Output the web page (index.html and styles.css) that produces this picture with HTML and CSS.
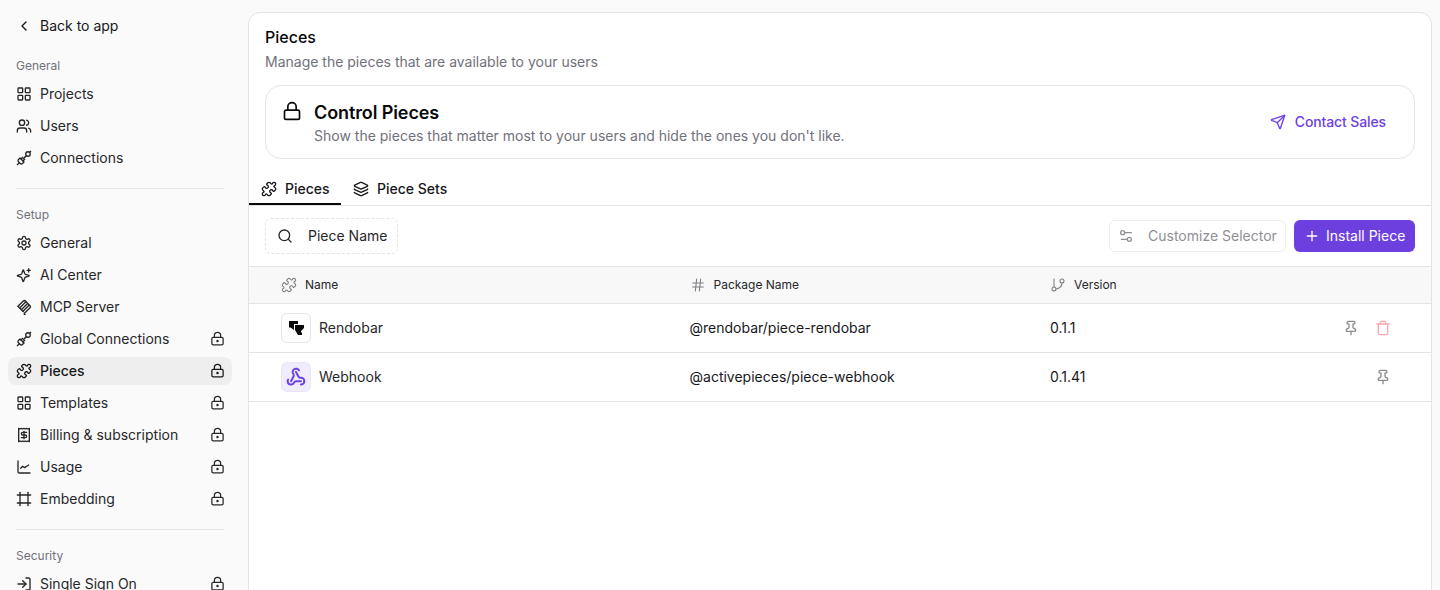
FILE: index.html
```html
<!DOCTYPE html>
<html lang="en">
<head>
<meta charset="utf-8">
<title>Pieces</title>
<link rel="stylesheet" href="styles.css">
</head>
<body>
<svg class="defs" aria-hidden="true">
  <symbol id="chev" viewBox="0 0 24 24"><path d="m15 18-6-6 6-6"/></symbol>
  <symbol id="grid" viewBox="0 0 24 24"><rect x="3" y="3" width="7" height="7" rx="1"/><rect x="14" y="3" width="7" height="7" rx="1"/><rect x="14" y="14" width="7" height="7" rx="1"/><rect x="3" y="14" width="7" height="7" rx="1"/></symbol>
  <symbol id="users" viewBox="0 0 24 24"><path d="M16 21v-2a4 4 0 0 0-4-4H6a4 4 0 0 0-4 4v2"/><circle cx="9" cy="7" r="4"/><path d="M22 21v-2a4 4 0 0 0-3-3.87"/><path d="M16 3.13a4 4 0 0 1 0 7.75"/></symbol>
  <symbol id="plug" viewBox="0 0 24 24"><path d="m2 22 3-3"/><path d="M6.3 20.3a2.4 2.4 0 0 0 3.4 0L12 18l-6-6-2.3 2.3a2.4 2.4 0 0 0 0 3.4Z"/><path d="M7.500 13.500 10 11"/><path d="M10.500 16.500 13 14"/><path d="m11 13 3-3"/><circle cx="18" cy="6" r="3.400"/><path d="m15.500 8.500-1.500 1.500"/><path d="m20.500 3.500 1.500-1.500"/></symbol>
  <symbol id="puzzle" viewBox="0 0 24 24"><path d="M19.439 7.85c-.049.322.059.648.289.878l1.568 1.568c.47.47.706 1.087.706 1.704s-.235 1.233-.706 1.704l-1.611 1.611a.98.98 0 0 1-.837.276c-.47-.07-.802-.48-.968-.925a2.501 2.501 0 1 0-3.214 3.214c.446.166.855.497.925.968a.979.979 0 0 1-.276.837l-1.61 1.61a2.404 2.404 0 0 1-1.705.707 2.402 2.402 0 0 1-1.704-.706l-1.568-1.568a1.026 1.026 0 0 0-.877-.29c-.493.074-.84.504-1.02.968a2.5 2.5 0 1 1-3.237-3.237c.464-.18.894-.527.967-1.02a1.026 1.026 0 0 0-.289-.877l-1.568-1.568A2.402 2.402 0 0 1 1.998 12c0-.617.236-1.234.706-1.704L4.23 8.77c.24-.24.581-.353.917-.303.515.077.877.528 1.073 1.01a2.5 2.5 0 1 0 3.259-3.259c-.482-.196-.933-.558-1.01-1.073-.05-.336.062-.676.303-.917l1.525-1.525A2.402 2.402 0 0 1 12 1.998c.617 0 1.234.236 1.704.706l1.568 1.568c.23.23.556.338.877.29.493-.074.84-.504 1.02-.968a2.5 2.5 0 1 1 3.237 3.237c-.464.18-.894.527-.967 1.02Z"/></symbol>
  <symbol id="gear" viewBox="0 0 24 24"><path d="M12.22 2h-.44a2 2 0 0 0-2 2v.18a2 2 0 0 1-1 1.730l-.43.25a2 2 0 0 1-2 0l-.15-.08a2 2 0 0 0-2.730.73l-.22.38a2 2 0 0 0 .73 2.730l.15.1a2 2 0 0 1 1 1.720v.51a2 2 0 0 1-1 1.740l-.15.09a2 2 0 0 0-.73 2.730l.22.38a2 2 0 0 0 2.730.73l.15-.08a2 2 0 0 1 2 0l.43.25a2 2 0 0 1 1 1.730V20a2 2 0 0 0 2 2h.44a2 2 0 0 0 2-2v-.18a2 2 0 0 1 1-1.730l.43-.25a2 2 0 0 1 2 0l.15.08a2 2 0 0 0 2.730-.73l.22-.39a2 2 0 0 0-.73-2.730l-.15-.08a2 2 0 0 1-1-1.740v-.5a2 2 0 0 1 1-1.740l.15-.09a2 2 0 0 0 .73-2.730l-.22-.38a2 2 0 0 0-2.730-.73l-.15.08a2 2 0 0 1-2 0l-.43-.25a2 2 0 0 1-1-1.730V4a2 2 0 0 0-2-2z"/><circle cx="12" cy="12" r="3"/></symbol>
  <symbol id="spark" viewBox="0 0 24 24"><path d="M8.700 16.500A2 2 0 0 0 7.500 15.300l-5.100-1.700a.5.5 0 0 1 0-.95l5.100-1.700a2 2 0 0 0 1.200-1.200l1.700-5.100a.5.5 0 0 1 .95 0l1.700 5.100a2 2 0 0 0 1.200 1.200l5.100 1.700a.5.5 0 0 1 0 .95l-5.100 1.700a2 2 0 0 0-1.200 1.200l-1.700 5.100a.5.5 0 0 1-.95 0z"/><path d="M19 2.500v5"/><path d="M21.500 5h-5"/></symbol>
  <symbol id="mcp" viewBox="0 0 24 24"><path d="m3 11 8-8c1-1 2-1 3 0"/><path d="m5.500 13.500 9-9"/><path d="m8 16 9-9"/><path d="m10.500 18.500 9-9"/><path d="M14 3l7 7c1 1 1 2 0 3l-8 8c-1 1-1 2 1 3"/><path d="M3 11l8 8"/></symbol>
  <symbol id="lockdot" viewBox="0 0 24 24"><circle cx="12" cy="16" r="1"/><rect x="3" y="10" width="18" height="12" rx="2"/><path d="M7 10V7a5 5 0 0 1 10 0v3"/></symbol>
  <symbol id="lock" viewBox="0 0 24 24"><rect x="3" y="11" width="18" height="11" rx="2"/><path d="M7 11V7a5 5 0 0 1 10 0v4"/></symbol>
  <symbol id="receipt" viewBox="0 0 24 24"><path d="M4 2v20l2-1 2 1 2-1 2 1 2-1 2 1 2-1 2 1V2l-2 1-2-1-2 1-2-1-2 1-2-1-2 1Z"/><path d="M16 8h-6a2 2 0 1 0 0 4h4a2 2 0 1 1 0 4H8"/><path d="M12 17.500v-11"/></symbol>
  <symbol id="chart" viewBox="0 0 24 24"><path d="M3 3v16a2 2 0 0 0 2 2h16"/><path d="m7 14 3-3 3 2 6-4"/></symbol>
  <symbol id="frame" viewBox="0 0 24 24"><path d="M22 6H2"/><path d="M22 18H2"/><path d="M6 2v20"/><path d="M18 2v20"/></symbol>
  <symbol id="login" viewBox="0 0 24 24"><path d="M15 3h4a2 2 0 0 1 2 2v14a2 2 0 0 1-2 2h-4"/><path d="m10 17 5-5-5-5"/><path d="M15 12H3"/></symbol>
  <symbol id="layers" viewBox="0 0 24 24"><path d="M12.830 2.180a2 2 0 0 0-1.660 0L2.600 6.080a1 1 0 0 0 0 1.830l8.580 3.910a2 2 0 0 0 1.660 0l8.580-3.900a1 1 0 0 0 0-1.830z"/><path d="M2 12a1 1 0 0 0 .58.91l8.600 3.910a2 2 0 0 0 1.650 0l8.580-3.900A1 1 0 0 0 22 12"/><path d="M2 17a1 1 0 0 0 .58.91l8.600 3.910a2 2 0 0 0 1.650 0l8.580-3.900A1 1 0 0 0 22 17"/></symbol>
  <symbol id="search" viewBox="0 0 24 24"><circle cx="11" cy="11" r="8"/><path d="m21 21-4.300-4.300"/></symbol>
  <symbol id="send" viewBox="0 0 24 24"><path d="M14.536 21.686a.5.5 0 0 0 .937-.024l6.500-19a.496.496 0 0 0-.635-.635l-19 6.500a.5.5 0 0 0-.024.937l7.930 3.180a2 2 0 0 1 1.112 1.110z"/><path d="m21.854 2.147-10.940 10.939"/></symbol>
  <symbol id="sliders" viewBox="0 0 24 24"><path d="M20 7h-9"/><path d="M14 17H5"/><circle cx="17" cy="17" r="3"/><circle cx="7" cy="7" r="3"/></symbol>
  <symbol id="plus" viewBox="0 0 24 24"><path d="M5 12h14"/><path d="M12 5v14"/></symbol>
  <symbol id="hash" viewBox="0 0 24 24"><path d="M4 9h16"/><path d="M4 15h16"/><path d="M10 3 8 21"/><path d="M16 3l-2 18"/></symbol>
  <symbol id="branch" viewBox="0 0 24 24"><path d="M6 3v12"/><circle cx="18" cy="6" r="3"/><circle cx="6" cy="18" r="3"/><path d="M18 9a9 9 0 0 1-9 9"/></symbol>
  <symbol id="pin" viewBox="0 0 24 24"><path d="M12 17v5"/><path d="M9 10.760a2 2 0 0 1-1.110 1.790l-1.780.9A2 2 0 0 0 5 15.240V16a1 1 0 0 0 1 1h12a1 1 0 0 0 1-1v-.76a2 2 0 0 0-1.110-1.790l-1.780-.9A2 2 0 0 1 15 10.760V7a1 1 0 0 1 1-1 2 2 0 0 0 0-4H8a2 2 0 0 0 0 4 1 1 0 0 1 1 1z"/></symbol>
  <symbol id="trash" viewBox="0 0 24 24"><path d="M3 6h18"/><path d="M19 6v14c0 1-1 2-2 2H7c-1 0-2-1-2-2V6"/><path d="M8 6V4c0-1 1-2 2-2h4c1 0 2 1 2 2v2"/></symbol>
  <symbol id="webhook" viewBox="0 0 24 24"><path d="M18 16.980h-5.990c-1.100 0-1.950.94-2.480 1.900A4 4 0 0 1 2 17c.01-.7.2-1.400.57-2"/><path d="m6 17 3.130-5.780c.53-.97.1-2.180-.5-3.100a4 4 0 1 1 6.890-4.060"/><path d="m12 6 3.130 5.730C15.660 12.700 16.900 13 18 13a4 4 0 0 1 0 8"/></symbol>
</svg>

<div class="app">
  <aside class="sidebar">
    <a class="back"><svg class="ico"><use href="#chev"/></svg><span>Back to app</span></a>

    <div class="group">
      <div class="label">General</div>
      <a class="item"><svg class="ico"><use href="#grid"/></svg><span>Projects</span></a>
      <a class="item"><svg class="ico"><use href="#users"/></svg><span>Users</span></a>
      <a class="item"><svg class="ico"><use href="#plug"/></svg><span>Connections</span></a>
    </div>
    <div class="sep"></div>

    <div class="group">
      <div class="label">Setup</div>
      <a class="item"><svg class="ico"><use href="#gear"/></svg><span>General</span></a>
      <a class="item"><svg class="ico"><use href="#spark"/></svg><span>AI Center</span></a>
      <a class="item"><svg class="ico"><use href="#mcp"/></svg><span>MCP Server</span></a>
      <a class="item"><svg class="ico"><use href="#plug"/></svg><span>Global Connections</span><svg class="ico lk"><use href="#lockdot"/></svg></a>
      <a class="item active"><svg class="ico"><use href="#puzzle"/></svg><span>Pieces</span><svg class="ico lk"><use href="#lockdot"/></svg></a>
      <a class="item"><svg class="ico"><use href="#grid"/></svg><span>Templates</span><svg class="ico lk"><use href="#lockdot"/></svg></a>
      <a class="item"><svg class="ico"><use href="#receipt"/></svg><span>Billing &amp; subscription</span><svg class="ico lk"><use href="#lockdot"/></svg></a>
      <a class="item"><svg class="ico"><use href="#chart"/></svg><span>Usage</span><svg class="ico lk"><use href="#lockdot"/></svg></a>
      <a class="item"><svg class="ico"><use href="#frame"/></svg><span>Embedding</span><svg class="ico lk"><use href="#lockdot"/></svg></a>
    </div>
    <div class="sep"></div>

    <div class="group">
      <div class="label">Security</div>
      <a class="item"><svg class="ico"><use href="#login"/></svg><span>Single Sign On</span><svg class="ico lk"><use href="#lockdot"/></svg></a>
    </div>
  </aside>

  <main class="panel">
    <header class="head">
      <h1 class="title">Pieces</h1>
      <p class="sub">Manage the pieces that are available to your users</p>
      <section class="promo">
        <svg class="promo-ico"><use href="#lock"/></svg>
        <div class="promo-text">
          <h2>Control Pieces</h2>
          <p>Show the pieces that matter most to your users and hide the ones you don't like.</p>
        </div>
        <a class="sales"><svg class="ico"><use href="#send"/></svg><span>Contact Sales</span></a>
      </section>
    </header>

    <nav class="tabs">
      <a class="tab on"><svg class="ico"><use href="#puzzle"/></svg><span>Pieces</span></a>
      <a class="tab"><svg class="ico"><use href="#layers"/></svg><span>Piece Sets</span></a>
    </nav>

    <div class="toolbar">
      <div class="filter"><svg class="ico"><use href="#search"/></svg><span>Piece Name</span></div>
      <div class="tools">
        <button class="btn ghost"><svg class="ico"><use href="#sliders"/></svg><span>Customize Selector</span></button>
        <button class="btn primary"><svg class="ico"><use href="#plus"/></svg><span>Install Piece</span></button>
      </div>
    </div>

    <div class="table">
      <div class="row th">
        <div class="cell"><svg class="ico"><use href="#puzzle"/></svg><span>Name</span></div>
        <div class="cell"><svg class="ico"><use href="#hash"/></svg><span>Package Name</span></div>
        <div class="cell"><svg class="ico"><use href="#branch"/></svg><span>Version</span></div>
        <div></div>
      </div>
      <div class="row">
        <div class="cell name">
          <span class="logo">
            <svg viewBox="0 0 15 14" class="rb"><path d="M0 0h9v3H5v6L1.500 6.500H0z"/><path d="M6 4h9v3l-3 3v1l1 1v2H9L6 9z"/></svg>
          </span><span>Rendobar</span>
        </div>
        <div class="cell">@rendobar/piece-rendobar</div>
        <div class="cell">0.1.1</div>
        <div class="acts">
          <button class="act"><svg class="ico"><use href="#pin"/></svg></button>
          <button class="act del"><svg class="ico"><use href="#trash"/></svg></button>
        </div>
      </div>
      <div class="row">
        <div class="cell name">
          <span class="logo hook"><svg class="hook-ico"><use href="#webhook"/></svg></span><span>Webhook</span>
        </div>
        <div class="cell">@activepieces/piece-webhook</div>
        <div class="cell">0.1.41</div>
        <div class="acts">
          <button class="act"><svg class="ico"><use href="#pin"/></svg></button>
        </div>
      </div>
    </div>
  </main>
</div>
</body>
</html>
```
FILE: styles.css
```css
* { box-sizing: border-box; }
html, body { margin: 0; height: 100%; overflow: hidden; }
body {
  background: #fafafa;
  color: #18181b;
  font-family: Inter, "Noto Sans", sans-serif;
  font-size: 14px;
  line-height: 20px;
}
.defs { display: none; }
.ico {
  width: 16px;
  height: 16px;
  flex: none;
  fill: none;
  stroke: currentColor;
  stroke-width: 2;
  stroke-linecap: round;
  stroke-linejoin: round;
}
.app { display: flex; height: 590px; overflow: hidden; }

/* sidebar */
.sidebar { width: 248px; flex: none; padding: 10px 16px 0 8px; height: 620px; }
.back, .item {
  display: flex;
  align-items: center;
  gap: 8px;
  height: 28px;
  padding: 0 8px;
  border-radius: 8px;
  color: #27272a;
}
.back { color: #18181b; height: 32px; }
.group { margin-top: 9px; display: flex; flex-direction: column; gap: 4px; }
.label {
  height: 28px;
  padding: 2px 8px 0;
  display: flex;
  align-items: center;
  font-size: 12px;
  line-height: 16px;
  color: #71717a;
  margin-bottom: -3px;
}
.sep { height: 1px; background: #e4e4e7; margin: 16px 8px 0; }
.sep + .group { margin-top: 11px; }
.item .lk { margin-left: auto; width: 15px; height: 15px; margin-right: -1px; margin-top: -1px; }
.item.active { background: #eeeeee; font-weight: 500; color: #18181b; }

/* main panel */
.panel {
  width: 1184px;
  margin-top: 12px;
  background: #fff;
  border: 1px solid #e4e4e7;
  border-radius: 12px 12px 0 0;
  display: flex;
  flex-direction: column;
  height: 640px;
}
.head { padding: 14px 16px 0; }
.title { margin: 0; font-size: 16px; line-height: 20px; font-weight: 500; color: #09090b; }
.sub { margin: 5px 0 0; color: #71717a; line-height: 20px; }
.promo {
  margin-top: 13px;
  height: 74px;
  border: 1px solid #e4e4e7;
  border-radius: 16px;
  display: flex;
  align-items: center;
  padding: 0 20px 0 16px;
}
.promo-ico {
  width: 20px;
  height: 20px;
  margin-right: 12px;
  margin-top: 15px;
  align-self: flex-start;
  fill: none;
  stroke: #09090b;
  stroke-width: 2;
  stroke-linecap: round;
  stroke-linejoin: round;
  flex: none;
}
.promo-text { flex: 1; padding-top: 2px; }
.promo-text h2 { margin: 0; font-size: 18px; line-height: 24px; font-weight: 600; letter-spacing: -0.1px; color: #09090b; }
.promo-text p { margin: 1px 0 0; color: #71717a; line-height: 20px; }
.sales {
  display: flex;
  align-items: center;
  gap: 9px;
  color: #6e41e2;
  font-weight: 500;
  letter-spacing: -0.12px;
  padding: 0 8px;
}

/* tabs */
.tabs {
  display: flex;
  height: 34px;
  margin-top: 13px;
  border-bottom: 1px solid #e4e4e7;
}
.tab {
  display: flex;
  align-items: center;
  gap: 8px;
  height: 33px;
  padding: 3px 12px 0;
  border-bottom: 2px solid transparent;
  font-weight: 500;
  color: #18181b;
}
.tab.on { border-bottom-color: #09090b; width: 92px; }

/* toolbar */
.toolbar {
  height: 60px;
  padding: 0 16px;
  display: flex;
  align-items: center;
  justify-content: space-between;
}
.filter {
  width: 133px;
  height: 36px;
  border: 1px dashed #e4e4e7;
  border-radius: 6px;
  display: flex;
  align-items: center;
  gap: 15px;
  padding: 0 11px;
  color: #27272a;
}
.filter span { white-space: nowrap; }
.tools { display: flex; gap: 8px; }
.btn {
  height: 32px;
  border-radius: 6px;
  display: flex;
  align-items: center;
  white-space: nowrap;
  font: 400 14px/20px Inter, "Noto Sans", sans-serif;
  cursor: pointer;
}
.ghost {
  width: 177px;
  padding: 0 8px;
  gap: 14px;
  background: #fff;
  border: 1px solid #eeeef0;
  color: #8f8f96;
}
.primary {
  width: 121px;
  padding: 0 10px;
  gap: 6px;
  background: #6e3fdf;
  border: 0;
  color: #fff;
}

/* table */
.row {
  display: grid;
  grid-template-columns: 408.5px 360.5px 1fr 64px;
  padding: 0 32px;
  align-items: center;
  height: 49px;
  border-bottom: 1px solid #e4e4e7;
}
.th {
  height: 38px;
  background: #f8f8f8;
  border-top: 1px solid #e4e4e7;
  font-size: 12px;
  line-height: 16px;
  color: #27272a;
}
.th .ico { color: #7c7c84; stroke-width: 1.6; }
.cell { display: flex; align-items: center; gap: 8px; }
.name { color: #27272a; }
.logo {
  width: 30px;
  height: 30px;
  border: 1px solid #e4e4e7;
  border-radius: 6px;
  display: flex;
  align-items: center;
  justify-content: center;
  flex: none;
}
.rb { width: 15px; height: 14px; fill: #09090b; stroke: none; }
.hook { background: #f0ecfb; border-color: #e9e4f8; }
.hook-ico {
  width: 20px;
  height: 20px;
  fill: none;
  stroke: #6e41e2;
  stroke-width: 2.4;
  stroke-linecap: round;
  stroke-linejoin: round;
}
.acts { display: flex; justify-content: flex-end; }
.act {
  width: 32px;
  height: 32px;
  display: flex;
  align-items: center;
  justify-content: center;
  padding: 0;
  border: 0;
  background: none;
  color: #8a8a8f;
}
.act.del { color: #fda4af; }
```
